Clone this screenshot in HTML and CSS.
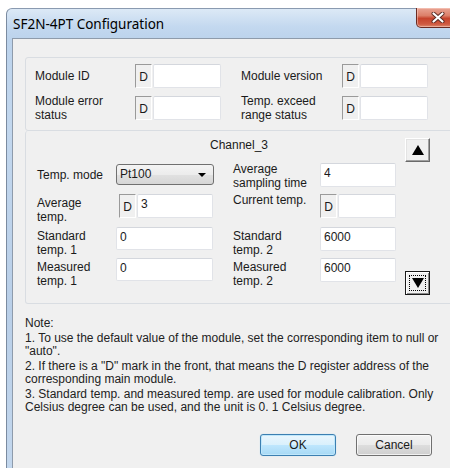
FILE: index.html
```html
<!DOCTYPE html>
<html lang="en">
<head>
<meta charset="utf-8">
<title>SF2N-4PT Configuration</title>
<link rel="stylesheet" href="styles.css">
</head>
<body>
<div class="window">
  <div class="titlebar">
    <span class="title">SF2N-4PT Configuration</span>
    <button class="close" type="button" aria-label="Close">
      <svg width="14" height="11" viewBox="0 0 14 11" aria-hidden="true">
        <path d="M2.5 1.5 L11.5 9.5 M11.5 1.5 L2.5 9.5" stroke="#5a2a22" stroke-width="4" stroke-linecap="round"/>
        <path d="M2.5 1.5 L11.5 9.5 M11.5 1.5 L2.5 9.5" stroke="#ffffff" stroke-width="2.2" stroke-linecap="round"/>
      </svg>
    </button>
  </div>

  <div class="client">
    <section class="panel ids">
      <span class="lbl">Module ID</span>
      <div class="field"><span class="dmark">D</span><input class="box" type="text" value=""></div>
      <span class="lbl">Module version</span>
      <div class="field"><span class="dmark">D</span><input class="box" type="text" value=""></div>

      <span class="lbl">Module error<br>status</span>
      <div class="field"><span class="dmark">D</span><input class="box" type="text" value=""></div>
      <span class="lbl">Temp. exceed<br>range status</span>
      <div class="field"><span class="dmark">D</span><input class="box" type="text" value=""></div>
    </section>

    <section class="panel channel">
      <div class="ch-title">Channel_3</div>

      <span class="lbl single">Temp. mode</span>
      <div class="combo"><span>Pt100</span><span class="caret"></span></div>
      <span class="lbl tight">Average<br>sampling time</span>
      <input class="box wide" type="text" value="4">

      <span class="lbl">Average<br>temp.</span>
      <div class="field inset"><span class="dmark">D</span><input class="box" type="text" value="3"></div>
      <span class="lbl tight">Current temp.</span>
      <div class="field"><span class="dmark">D</span><input class="box" type="text" value=""></div>

      <span class="lbl">Standard<br>temp. 1</span>
      <input class="box long" type="text" value="0">
      <span class="lbl">Standard<br>temp. 2</span>
      <input class="box wide" type="text" value="6000">

      <span class="lbl">Measured<br>temp. 1</span>
      <input class="box long" type="text" value="0">
      <span class="lbl">Measured<br>temp. 2</span>
      <input class="box wide" type="text" value="6000">

      <div class="pager">
        <button class="step" type="button" aria-label="Previous channel"><span class="tri up"></span></button>
        <button class="step focused" type="button" aria-label="Next channel"><span class="focus-ring"><span class="tri down"></span></span></button>
      </div>
    </section>

    <div class="note">
      <p>Note:</p>
      <p>1. To use the default value of the module, set the corresponding item to null or "auto".</p>
      <p>2. If there is a "D" mark in the front, that means the D register address of the corresponding main module.</p>
      <p>3. Standard temp. and measured temp. are used for module calibration. Only Celsius degree can be used, and the unit is 0. 1 Celsius degree.</p>
    </div>

    <div class="actions">
      <button class="btn default" type="button">OK</button>
      <button class="btn" type="button">Cancel</button>
    </div>
  </div>
</div>
</body>
</html>
```

FILE: styles.css
```css
* { box-sizing: border-box; }

html, body {
  margin: 0;
  width: 450px;
  height: 468px;
  overflow: hidden;
  background: #ffffff;
}

body {
  font-family: "Liberation Sans", Arial, sans-serif;
  font-size: 12px;
  color: #1a1a1a;
}

/* window frame with glass caption */
.window {
  margin: 8px 0 0 6px;
  width: 470px;
  height: 480px;
  padding-left: 5px;
  border-left: 1px solid #7b8ba0;
  border-top: 1px solid #8a9ab0;
  border-top-left-radius: 6px;
  background: linear-gradient(180deg, #dce9f6 0px, #c3d8ef 18px, #bcd3ec 30px, #c2d7ee 120px, #b9cfe8 300px, #c4d8ee 480px);
  display: flex;
  flex-direction: column;
}

.titlebar {
  height: 29px;
  display: flex;
  align-items: center;
  flex: none;
}

.title {
  padding-left: 1px;
  font-family: "Noto Sans", "Open Sans", sans-serif;
  font-size: 13.5px;
  color: #000;
}

.close {
  align-self: flex-start;
  margin: -1px 17px 0 auto;
  width: 43px;
  height: 20px;
  padding: 0;
  border: 1px solid #6b2b22;
  border-top: 0;
  border-radius: 0 0 5px 5px;
  background: linear-gradient(180deg, #e9a493 0%, #dc7f69 40%, #c6432c 55%, #cf5a41 85%, #dd8a6e 100%);
  box-shadow: inset 0 0 0 1px rgba(255, 220, 210, 0.45);
  display: flex;
  align-items: center;
  justify-content: center;
}

/* dialog client area */
.client {
  flex: 1;
  background: #f0f0f0;
  border-left: 1px solid #8e9bab;
  border-top: 1px solid #8e9bab;
  padding: 18px 0 0 12px;
}

.panel {
  width: 428px;
  border: 1px solid #d9dde2;
  border-radius: 3px;
}

.lbl {
  line-height: 14px;
  color: #1a1a1a;
}

/* module id / version block */
.ids {
  display: grid;
  grid-template-columns: 100px 106px 101px 86px;
  row-gap: 6px;
  padding: 6px 0 8px 9px;
  align-items: center;
}

.field {
  display: flex;
  gap: 1px;
  width: 86px;
  height: 24px;
}

.dmark {
  flex: none;
  width: 17px;
  height: 100%;
  border-top: 1px solid #9a9a9a;
  border-left: 1px solid #9a9a9a;
  border-right: 1px solid #ffffff;
  border-bottom: 1px solid #ffffff;
  background: #f0f0f0;
  display: flex;
  align-items: center;
  justify-content: center;
  padding-top: 1px;
  color: #1a1a1a;
}

.box {
  font: inherit;
  color: #1a1a1a;
  background: #ffffff;
  border: 1px solid #e1e3e8;
  border-top-color: #d4d7dd;
  border-radius: 2px;
  padding: 0 3px 4px;
  height: 24px;
  width: 68px;
  outline: none;
}

.field .box {
  flex: 1 1 0;
  min-width: 0;
  width: 0;
}

/* channel block */
.channel {
  border-top: 0;
  display: grid;
  grid-template-columns: 79px 117px 87px 76px 45px;
  grid-template-rows: 25px 31px 33px 31px 37px;
  padding: 7px 11px 8px 11px;
  align-items: start;
}

.ch-title {
  grid-column: 1 / -1;
  grid-row: 1;
  text-align: center;
  line-height: 15px;
}

.channel .lbl { padding-top: 2px; }
.channel .lbl.tight { padding-top: 0; margin-top: -1px; }
.channel .lbl.single { line-height: 22px; padding-top: 0; margin-top: 1px; }

.channel .box.long { width: 97px; height: 23px; }
.channel .box.wide { width: 76px; }
.channel .field.inset { width: 94px; margin-left: 3px; }
.channel .field { width: 76px; }

.combo {
  margin-top: 1px;
  width: 98px;
  height: 21px;
  border: 1px solid #707070;
  border-radius: 3px;
  background: linear-gradient(180deg, #f4f4f4 0%, #ececec 50%, #e1e1e1 51%, #d6d6d6 100%);
  display: flex;
  align-items: center;
  justify-content: space-between;
  padding: 0 7px 1px 3px;
}

.caret {
  width: 0;
  height: 0;
  border-left: 4px solid transparent;
  border-right: 4px solid transparent;
  border-top: 4px solid #000;
  margin-top: 2px;
}

.pager {
  grid-column: 5;
  grid-row: 1 / -1;
  height: 157px;
  padding-left: 9px;
  display: flex;
  flex-direction: column;
  justify-content: space-between;
}

.step {
  width: 25px;
  height: 24px;
  padding: 0;
  background: #f0f0f0;
  border-top: 1px solid #ffffff;
  border-left: 1px solid #ffffff;
  border-right: 1px solid #6a6a6a;
  border-bottom: 1px solid #6a6a6a;
  box-shadow: inset -1px -1px 0 #a0a0a0, inset 1px 1px 0 #e3e3e3;
  display: flex;
  align-items: center;
  justify-content: center;
}

.step.focused {
  border: 1px solid #1a1a1a;
  box-shadow: inset 1px 1px 0 #ffffff, inset -1px -1px 0 #8a8a8a;
}

.focus-ring {
  width: 17px;
  height: 16px;
  border: 1px dotted #000;
  display: flex;
  align-items: center;
  justify-content: center;
}

.tri {
  width: 0;
  height: 0;
  border-left: 6px solid transparent;
  border-right: 6px solid transparent;
}
.tri.up { border-bottom: 10px solid #000; margin-top: -1px; }
.tri.down { border-top: 10px solid #000; }

/* notes */
.note {
  margin-top: 13px;
  line-height: 13px;
  color: #222;
  width: 428px;
}
.note p { margin: 0 0 2px; }

/* dialog buttons */
.actions {
  width: 428px;
  margin-top: 20px;
  padding-right: 21px;
  display: flex;
  justify-content: flex-end;
  gap: 20px;
}

.btn {
  font: inherit;
  color: #1a1a1a;
  width: 76px;
  height: 22px;
  padding: 0 0 1px;
  border: 1px solid #707070;
  border-radius: 3px;
  background: linear-gradient(180deg, #f3f3f3 0%, #ebebeb 50%, #dddddd 51%, #cfcfcf 100%);
  box-shadow: inset 0 0 0 1px rgba(255, 255, 255, 0.7);
}

.btn.default {
  border-color: #3c7fb1;
  background: linear-gradient(180deg, #eaf6fd 0%, #d9f0fc 50%, #bee6fd 51%, #a7d9f5 100%);
  box-shadow: inset 0 0 0 1px #bfe7fb, 0 0 1px #9cd0ee;
}
```
